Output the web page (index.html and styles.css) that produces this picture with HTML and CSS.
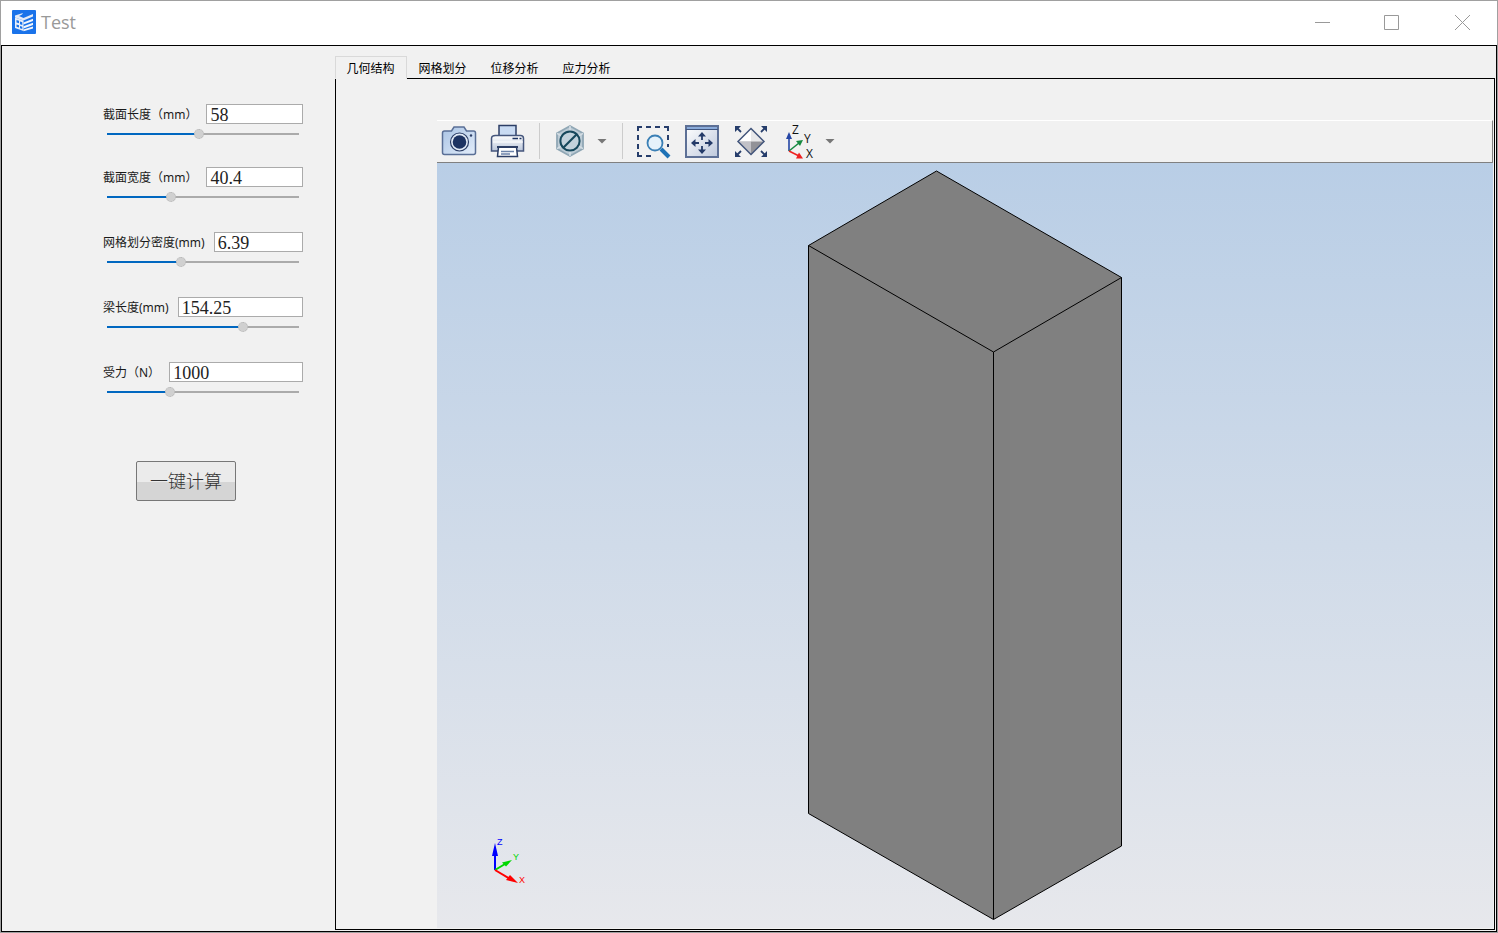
FILE: index.html
```html
<!DOCTYPE html>
<html lang="zh-CN">
<head>
<meta charset="utf-8">
<title>Test</title>
<link rel="stylesheet" href="styles.css">
</head>
<body>
<div class="window">
  <header class="titlebar">
    <svg class="app-icon" viewBox="0 0 24 24" aria-hidden="true">
      <rect width="24" height="24" rx="1" fill="#1a73ea"/>
      <path d="M3 5.500L11 3l-1 1.500L7 6l4.500 2 9.500-4v2.500L11.500 10.500 3 7.500z" fill="#e4ebf7"/>
      <path d="M3 7.500l8.500 3V21L3 18z" fill="#e8eef8"/>
      <path d="M4.500 10l2.500.8v2.500l-2.500-.8zM8 11.500l2.300.8V15L8 14.200zM4.500 14.500l2.500.8v2.200l-2.500-.8zM8 16l2.300.8v2.200L8 18.200z" fill="#1a73ea"/>
      <path d="M11.500 12.500l9.500-3.700v2.100l-9.500 3.700zM11.500 16.300l9.500-3.600v2.200l-9.500 3.500zM11.500 19.400l9.500-3v2l-9.500 2.800z" fill="#f4f7fc"/>
    </svg>
    <h1 class="title">Test</h1>
    <div class="window-buttons">
      <button class="window-button" type="button" aria-label="最小化"><svg viewBox="0 0 16 16"><path d="M1 8.500h15"/></svg></button>
      <button class="window-button" type="button" aria-label="最大化"><svg viewBox="0 0 16 16"><path d="M.5 1.500h14v14H.5z"/></svg></button>
      <button class="window-button" type="button" aria-label="关闭"><svg viewBox="0 0 16 16"><path d="M1 1l15 15M16 1L1 16"/></svg></button>
    </div>
  </header>
  <main class="content">
    <form class="params">
      <div class="param param-first">
        <div class="param-head"><label for="len">截面长度（mm）</label><input class="field" id="len" type="text" value="58"></div>
        <input class="slider" type="range" aria-label="截面长度" min="0" max="100" step="any" value="47.8" style="--fill:48%">
      </div>
      <div class="param">
        <div class="param-head"><label for="wid">截面宽度（mm）</label><input class="field" id="wid" type="text" value="40.4"></div>
        <input class="slider" type="range" aria-label="截面宽度" min="0" max="100" step="any" value="32.4" style="--fill:33%">
      </div>
      <div class="param">
        <div class="param-head"><label for="mesh">网格划分密度(mm)</label><input class="field" id="mesh" type="text" value="6.39"></div>
        <input class="slider" type="range" aria-label="网格划分密度" min="0" max="100" step="any" value="37.9" style="--fill:38%">
      </div>
      <div class="param">
        <div class="param-head"><label for="beam">梁长度(mm)</label><input class="field" id="beam" type="text" value="154.25"></div>
        <input class="slider" type="range" aria-label="梁长度" min="0" max="100" step="any" value="72" style="--fill:71%">
      </div>
      <div class="param">
        <div class="param-head"><label for="force">受力（N）</label><input class="field" id="force" type="text" value="1000"></div>
        <input class="slider" type="range" aria-label="受力" min="0" max="100" step="any" value="31.9" style="--fill:33%">
      </div>
      <button class="compute" type="button">一键计算</button>
    </form>
    <section class="results">
      <div class="tabs" role="tablist">
        <button class="tab tab-active" type="button" role="tab" aria-selected="true">几何结构</button>
        <button class="tab" type="button" role="tab" aria-selected="false">网格划分</button>
        <button class="tab" type="button" role="tab" aria-selected="false">位移分析</button>
        <button class="tab" type="button" role="tab" aria-selected="false">应力分析</button>
      </div>
      <div class="panel" role="tabpanel">
        <div class="toolbar">
          <button class="tool" type="button" aria-label="截图"><svg viewBox="0 0 36 36">
            <defs><linearGradient id="cam" x2="1" y2="1"><stop stop-color="#a9c3e4"/><stop offset="1" stop-color="#e3edfa"/></linearGradient></defs>
            <path d="M3.500 8h7l2.500-4h10l2.500 4h7q2 0 2 2v19.500q0 2-2 2h-29q-2 0-2-2V10q0-2 2-2z" fill="url(#cam)" stroke="#5a6f96" stroke-width="1.500"/>
            <circle cx="18.500" cy="19" r="9" fill="#e4ecf7" stroke="#2c3e66" stroke-width="1.200"/><circle cx="18.500" cy="19" r="6.800" fill="#1d3362"/><circle cx="30" cy="12.500" r="1.200" fill="#2c3e66"/>
          </svg></button>
          <button class="tool" type="button" aria-label="打印"><svg viewBox="0 0 36 36">
            <defs><linearGradient id="pr" x2="0" y2="1"><stop stop-color="#fff"/><stop offset="1" stop-color="#b9c5da"/></linearGradient></defs>
            <path d="M9 13V2.500h17V13" fill="#c9dbf3" stroke="#2c3e66" stroke-width="1.500"/>
            <path d="M5.500 12.500h25q3 0 3 3V28H1.500V15.500q0-3 4-3z" fill="url(#pr)" stroke="#45567c" stroke-width="1.500"/>
            <path d="M22.500 15.500h5.500M29.500 15.500h2" stroke="#1d3362" stroke-width="1.600"/><path d="M3 19h30" stroke="#fff"/>
            <path d="M8.500 24h18l1 9.500H7.500z" fill="#fff" stroke="#2c3e66" stroke-width="1.500"/><path d="M7 24h21" stroke="#2c3e66" stroke-width="2"/><path d="M11 28.500h13M11 31h9" stroke="#6c83aa" stroke-width="1.400"/>
          </svg></button>
          <span class="divider"></span>
          <button class="tool tool-section" type="button" aria-label="剖面"><svg viewBox="0 0 36 36">
            <path d="M18 3l13 7.300v15.400L18 33 5 25.700V10.300z" fill="#bccbd5" stroke="#90a7b5" stroke-width="1.800"/>
            <path d="M18 3v30M5 10.300l26 15.400M31 10.300L5 25.700" stroke="#d5dee5" stroke-width="1.500"/>
            <circle cx="18" cy="18" r="9.600" fill="#c2d2dc" stroke="#16485c" stroke-width="2"/><path d="M11.500 24.500l13-13" stroke="#16485c" stroke-width="2.200"/>
          </svg></button>
          <button class="caret" type="button" aria-label="剖面选项"></button>
          <span class="divider"></span>
          <button class="tool" type="button" aria-label="框选缩放"><svg viewBox="0 0 36 36">
            <path d="M3 8V4h4M11 4h5M20 4h5M29 4h4v4M33 12v5M33 21v3M3 12v5M3 21v5M3 29v4h4M11 33h5" fill="none" stroke="#263d6b" stroke-width="2"/>
            <path d="M26 26l8 8" stroke="#1e72b6" stroke-width="4"/><circle cx="20" cy="20" r="7.500" fill="#e5f1fa" stroke="#3a7fb5" stroke-width="1.800"/>
          </svg></button>
          <button class="tool" type="button" aria-label="平移"><svg viewBox="0 0 36 36">
            <defs><linearGradient id="pan" x2="1" y2="1"><stop stop-color="#fff"/><stop offset="1" stop-color="#bdc8dc"/></linearGradient></defs>
            <path d="M2 3h32v31H2z" fill="url(#pan)" stroke="#5d7096" stroke-width="2"/><path d="M3 4h30v2H3z" fill="#8aabda"/><path d="M2 6.500h32" stroke="#405680"/>
            <path d="M18 12v5M18 23v5M9 20h6M21 20h6" stroke="#243b69" stroke-width="1.800"/><path d="M18 9l4 4.500h-8zM18 31l4-4.500h-8zM7 20l4.500-4v8zM29 20l-4.500-4v8z" fill="#243b69"/>
          </svg></button>
          <button class="tool" type="button" aria-label="适应窗口"><svg viewBox="0 0 36 36">
            <path d="M18 5.500L31 18.500H5z" fill="#e8e8ea"/><path d="M5 18.500h26L18 31.500z" fill="#929298"/><path d="M18 5.500v13H5z" fill="#fff"/><path d="M5 18.500h13v13z" fill="#c1c1c7"/>
            <path d="M18 5.500l13 13-13 13-13-13z" fill="none" stroke="#42557b" stroke-width="1.500"/>
            <path d="M3 4l5 5M33 4l-5 5M3 33l5-5M33 33l-5-5" stroke="#263d6b" stroke-width="1.800"/><path d="M2 3h6L2 9zM34 3h-6l6 6zM2 34h6l-6-6zM34 34h-6l6-6z" fill="#263d6b"/>
          </svg></button>
          <button class="tool" type="button" aria-label="视图方向"><svg class="axes" viewBox="0 0 36 36">
            <path d="M7 28V12" stroke="#2546a5" stroke-width="1.600"/><path d="M7 9l3 7H4z" fill="#2546a5"/>
            <path d="M7 28l10-8" stroke="#168a41" stroke-width="1.600"/><path d="M21 17l-3 6-4-5z" fill="#168a41"/>
            <path d="M7 28l10 5" stroke="#e22" stroke-width="1.600"/><path d="M21 35.500h-7l3-6z" fill="#e22"/>
            <g font-family="Open Sans, sans-serif" font-size="12" fill="#111"><text x="10" y="11">Z</text><text x="22" y="20">Y</text><text x="24" y="35">X</text></g>
          </svg></button>
          <button class="caret caret-view" type="button" aria-label="视图选项"></button>
        </div>
        <div class="viewport">
          <svg class="scene" viewBox="437 163 1056 765" role="img" aria-label="梁模型">
            <path d="M936.500 171L1121.500 277.500V846L993.500 919.500 808.500 813.500V245.500z" fill="#808080" stroke="#000"/>
            <path d="M808.500 245.500L993.500 352 1121.500 277.500M993.500 352v567" fill="none" stroke="#000"/>
            <path d="M495 870v-20" stroke="#00f" stroke-width="2"/><path d="M495 843l3 13h-6z" fill="#00f"/>
            <path d="M495 870l10-6" stroke="#00d800" stroke-width="2"/><path d="M512 860l-6 6.500-4-4z" fill="#00d800"/>
            <path d="M495 870l15 9" stroke="#f00" stroke-width="2"/><path d="M518 883l-12-3 4-5z" fill="#f00"/>
            <g font-family="Liberation Sans, sans-serif" font-size="9"><text x="497" y="845" fill="#00f">Z</text><text x="513" y="860" fill="#00d800">Y</text><text x="519" y="883" fill="#f00">X</text></g>
          </svg>
        </div>
      </div>
    </section>
  </main>
</div>
</body>
</html>
```
FILE: styles.css
```css
* { box-sizing: border-box; }
body { margin: 0; font-family: "Noto Sans", "Noto Sans CJK SC", sans-serif; font-size: 12px; color: #000; }
button, input { font: inherit; color: inherit; margin: 0; padding: 0; }
button { border: 0; background: none; }
.window { display: flex; flex-direction: column; height: 100vh; background: #fff; border: 1px solid #a0a0a0; }
.titlebar { display: flex; align-items: center; height: 44px; padding: 0 0 2px 11px; }
.app-icon { width: 24px; height: 24px; }
.title { margin: 0 0 0 5px; font-size: 18px; font-weight: 400; line-height: 24px; color: #999; font-family: "Open Sans", sans-serif; }
.window-buttons { display: flex; margin-left: auto; }
.window-button { display: grid; place-items: center; width: 70px; height: 42px; }
.window-button svg { width: 16px; height: 16px; fill: none; stroke: #999; }
.content { display: flex; flex: 1; min-height: 0; border: 1px solid #000; background: #f1f1f1; }
.params { display: flex; flex-direction: column; flex: none; width: 333px; padding: 58px 32px 0 101px; }
.param { height: 65px; }
.param-first { height: 63px; }
.param-head { display: flex; align-items: center; gap: 9px; height: 20px; }
.param-head label { white-space: nowrap; line-height: 20px; padding-top: 2px; color: #1a1a1a; }
.field { flex: 1; min-width: 0; width: 0; height: 20px; padding: 2px 3px 0; border: 1px solid #ababab; border-radius: 0; background: #fff; font-family: "Liberation Serif", serif; font-size: 18px; line-height: 18px; color: #222; }
.slider { appearance: none; display: block; width: calc(100% - 8px); height: 12px; margin: 4px; background: none; }
.slider::-webkit-slider-runnable-track { height: 2px; background: linear-gradient(to right, #0067c0 var(--fill), #ababab var(--fill)); }
.slider::-webkit-slider-thumb { appearance: none; width: 10px; height: 10px; margin-top: -4px; border-radius: 50%; background: #d0d0d0; border: 1px dotted #b4b4b4; }
.compute { width: 100px; height: 40px; margin: 34px 0 0 33px; padding-bottom: 2px; border: 1px solid #777; border-radius: 2px; background: linear-gradient(#ebebeb 52%, #d5d5d5 52%); font-family: "Noto Sans CJK SC", sans-serif; font-size: 18px; font-weight: 300; color: #333; }
.results { display: flex; flex: 1; flex-direction: column; min-width: 0; padding: 10px 1px 1px 0; }
.tabs { display: flex; height: 22px; }
.tab { width: 72px; height: 22px; padding: 2px 1px 0 0; line-height: 18px; font-family: "Noto Sans CJK SC", sans-serif; }
.tab-active { position: relative; z-index: 1; height: 23px; padding-top: 0; border: 1px solid #d9d9d9; border-bottom-color: #f1f1f1; background: #f1f1f1; }
.panel { display: flex; flex: 1; flex-direction: column; min-height: 0; padding: 41px 1px 1px 101px; border: 1px solid #000; }
.toolbar { display: flex; align-items: center; height: 43px; padding: 0 0 1px 4px; border: solid #808080; border-width: 1px 1px 1px 0; border-top-color: #fff; }
.tool { width: 36px; height: 36px; margin-right: 13px; flex: none; }
.tool svg { display: block; width: 36px; height: 36px; }
.tool .axes { overflow: visible; }
.tool-section { margin: 0 9px 0 12px; }
.divider { width: 1px; height: 36px; background: #ccc; }
.divider + .tool:not(.tool-section) { margin-left: 12px; }
.caret { flex: none; width: 10px; height: 5px; background: #777; clip-path: polygon(0 0, 100% 0, 50% 100%); }
.caret + .divider { margin-left: 15px; }
.tool + .caret-view { margin-left: -6px; }
.viewport { flex: 1; min-height: 0; background: linear-gradient(#b9cee6, #e7e8ec); }
.scene { display: block; width: 100%; height: 100%; }
```
